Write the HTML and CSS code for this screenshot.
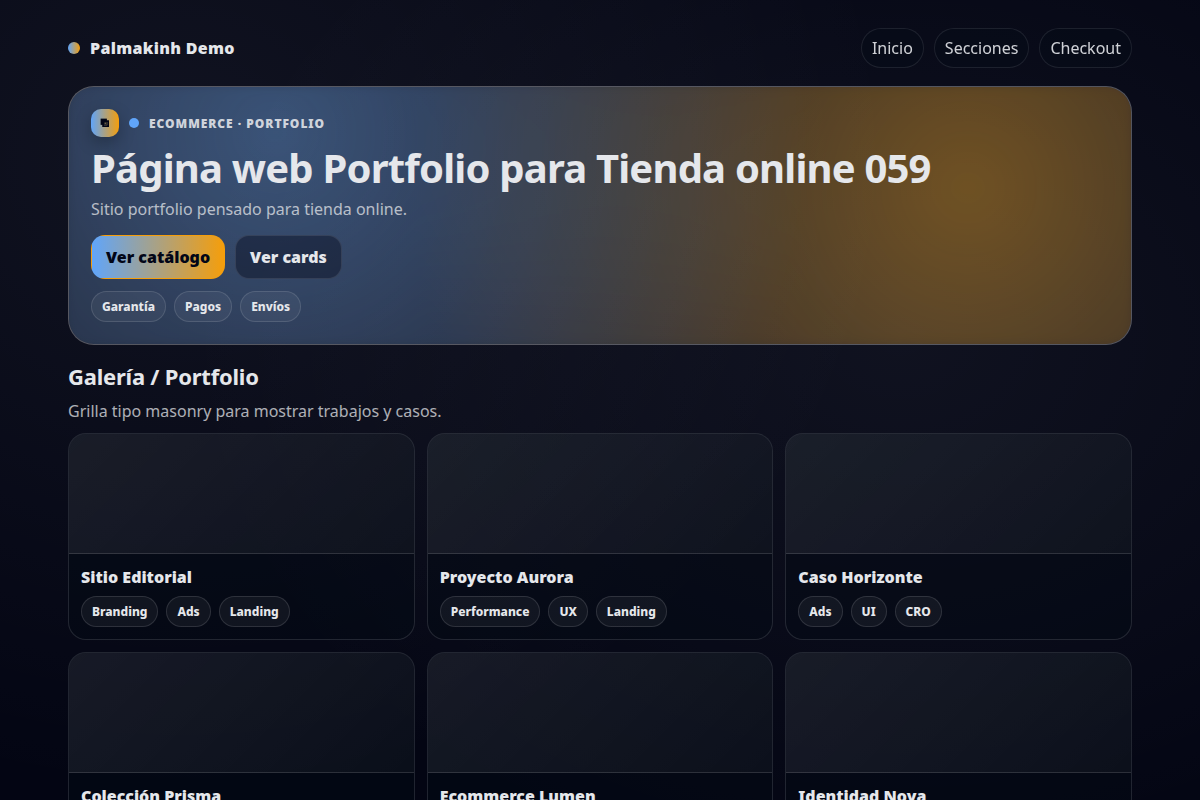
FILE: index.html
```
<!DOCTYPE html>
<html lang="es">
  <head>
    <meta charset="UTF-8" />
    <meta name="viewport" content="width=device-width, initial-scale=1" />
    <title>Página web Portfolio para Tienda online 059</title>
    <link rel="stylesheet" href="styles.css">
  </head>
  <body>
    <div class="container">
      <header class="topbar">
        <div class="brand"><span class="brand-dot"></span>Palmakinh Demo</div>
        <nav class="nav">
          <a href="#inicio">Inicio</a>
          <a href="#secciones">Secciones</a>
          <a href="#checkout">Checkout</a>
        </nav>
      </header>

      <section class="hero" id="inicio">
        <div class="kicker">
          <span class="icon">
            <svg width="10" height="10" viewBox="0 0 8 8" aria-hidden="true">
              <rect x="0.5" y="0.5" width="5" height="5" fill="currentColor" />
              <rect x="2.5" y="2.5" width="4" height="4" fill="none" stroke="currentColor" stroke-width="1.4" />
              <rect x="3.6" y="3.6" width="1.4" height="1.4" fill="#6b6144" />
            </svg>
          </span>
          <span class="dot"></span>
          <span>Ecommerce · Portfolio</span>
        </div>
        <h1>Página web Portfolio para Tienda online 059</h1>
        <p class="lead">Sitio portfolio pensado para tienda online.</p>
        <div class="actions">
          <button class="btn btn-primary" type="button">Ver catálogo</button>
          <button class="btn" type="button">Ver cards</button>
        </div>
        <div class="chips">
          <span class="chip">Garantía</span>
          <span class="chip">Pagos</span>
          <span class="chip">Envíos</span>
        </div>
      </section>

      <section class="gallery" id="secciones">
        <h2>Galería / Portfolio</h2>
        <p class="muted">Grilla tipo masonry para mostrar trabajos y casos.</p>
        <div class="grid">
          <article class="card">
            <div class="media"></div>
            <div class="card-body">
              <h3>Sitio Editorial</h3>
              <div class="chips"><span class="chip">Branding</span><span class="chip">Ads</span><span class="chip">Landing</span></div>
            </div>
          </article>
          <article class="card">
            <div class="media"></div>
            <div class="card-body">
              <h3>Proyecto Aurora</h3>
              <div class="chips"><span class="chip">Performance</span><span class="chip">UX</span><span class="chip">Landing</span></div>
            </div>
          </article>
          <article class="card">
            <div class="media"></div>
            <div class="card-body">
              <h3>Caso Horizonte</h3>
              <div class="chips"><span class="chip">Ads</span><span class="chip">UI</span><span class="chip">CRO</span></div>
            </div>
          </article>
          <article class="card">
            <div class="media"></div>
            <div class="card-body">
              <h3>Colección Prisma</h3>
            </div>
          </article>
          <article class="card">
            <div class="media"></div>
            <div class="card-body">
              <h3>Ecommerce Lumen</h3>
            </div>
          </article>
          <article class="card">
            <div class="media"></div>
            <div class="card-body">
              <h3>Identidad Nova</h3>
            </div>
          </article>
        </div>
      </section>
    </div>
  </body>
</html>
```
FILE: styles.css
```
:root {
  --blue: #60a5fa;
  --amber: #f59e0b;
  --text: #e5e7eb;
  --line: rgba(255, 255, 255, 0.12);
}
* {
  box-sizing: border-box;
}
body {
  margin: 0;
  min-height: 100vh;
  font-family: "Noto Sans", sans-serif;
  font-size: 16px;
  color: var(--text);
  background:
    radial-gradient(900px 800px at 15% 20%, rgba(240, 245, 255, 0.06), transparent 80%),
    radial-gradient(900px 700px at 75% 42%, rgba(240, 245, 255, 0.055), transparent 80%),
    #030513;
  background-attachment: fixed;
}
h1,
h2,
h3,
p {
  margin: 0;
}
.container {
  max-width: 1100px;
  margin: 0 auto;
  padding: 28px 18px;
}
.topbar {
  display: flex;
  align-items: center;
  justify-content: space-between;
  margin-bottom: 18px;
}
.brand {
  display: flex;
  align-items: center;
  gap: 10px;
  font-weight: 900;
  letter-spacing: 0.02em;
}
.brand-dot {
  width: 12px;
  height: 12px;
  border-radius: 50%;
  background: linear-gradient(90deg, var(--blue), var(--amber));
}
.nav {
  display: flex;
  gap: 10px;
}
.nav a {
  padding: 8px 10px;
  border: 1px solid rgba(255, 255, 255, 0.1);
  border-radius: 999px;
  background: rgba(2, 12, 23, 0.35);
  color: var(--text);
  text-decoration: none;
  opacity: 0.9;
}
.hero {
  position: relative;
  overflow: hidden;
  padding: 22px;
  border: 1px solid rgba(255, 255, 255, 0.3);
  border-radius: 26px;
  background: rgba(255, 255, 255, 0.04);
  background-clip: padding-box;
}
/* soft glow behind the hero content */
.hero::before {
  content: "";
  position: absolute;
  inset: -10px;
  z-index: -1;
  border-radius: 26px;
  background:
    radial-gradient(circle at 20% 20%, rgba(96, 165, 250, 0.36), transparent 60%),
    radial-gradient(circle at 84% 40%, rgba(245, 158, 11, 0.38), transparent 60%),
    rgba(255, 255, 255, 0.04);
  filter: blur(8px);
}
.kicker {
  display: flex;
  align-items: center;
  gap: 10px;
  font-size: 12px;
  font-weight: 900;
  letter-spacing: 0.08em;
  text-transform: uppercase;
  color: rgba(229, 231, 235, 0.9);
}
.icon {
  display: grid;
  place-items: center;
  width: 28px;
  height: 28px;
  border-radius: 10px;
  background: linear-gradient(90deg, var(--blue), var(--amber));
  box-shadow: 0 6px 16px rgba(0, 0, 0, 0.25);
  color: #020617;
}
.dot {
  width: 10px;
  height: 10px;
  border-radius: 50%;
  background: var(--blue);
}
.hero h1 {
  margin: 10px 0 9px;
  font-size: 40px;
  line-height: 42px;
  letter-spacing: -0.02em;
}
.lead {
  color: rgba(229, 231, 235, 0.75);
}
.actions {
  display: flex;
  flex-wrap: wrap;
  gap: 10px;
  margin: 15px 0 12px;
}
.btn {
  padding: 10px 14px;
  border: 1px solid rgba(255, 255, 255, 0.1);
  border-radius: 14px;
  background: rgba(2, 6, 23, 0.4);
  color: var(--text);
  font: inherit;
  font-weight: 900;
  cursor: pointer;
}
.btn-primary {
  border-color: transparent;
  background: var(--amber) linear-gradient(90deg, var(--blue), var(--amber)) no-repeat;
  color: #020617;
}
.chips {
  display: flex;
  flex-wrap: wrap;
  gap: 8px;
}
.chip {
  padding: 6px 10px;
  border: 1px solid var(--line);
  border-radius: 999px;
  background: rgba(255, 255, 255, 0.05);
  font-size: 12px;
  font-weight: 800;
}
.gallery {
  margin-top: 16px;
}
.gallery h2 {
  font-size: 22px;
  line-height: 30px;
  letter-spacing: -0.01em;
}
.muted {
  margin: 9px 0 11px;
  color: rgba(229, 231, 235, 0.75);
}
.grid {
  display: grid;
  grid-template-columns: repeat(3, 1fr);
  gap: 12px;
}
.card {
  overflow: hidden;
  border: 1px solid var(--line);
  border-radius: 18px;
  background: rgba(2, 10, 20, 0.4);
}
.media {
  height: 120px;
  border-bottom: 1px solid var(--line);
  background: linear-gradient(135deg, rgba(255, 255, 255, 0.075), rgba(255, 255, 255, 0.03));
}
.card-body {
  padding: 12px;
}
.card h3 {
  margin-bottom: 8px;
  font-size: 16px;
  font-weight: 900;
}
@media (max-width: 800px) {
  .grid {
    grid-template-columns: 1fr;
  }
}
```
